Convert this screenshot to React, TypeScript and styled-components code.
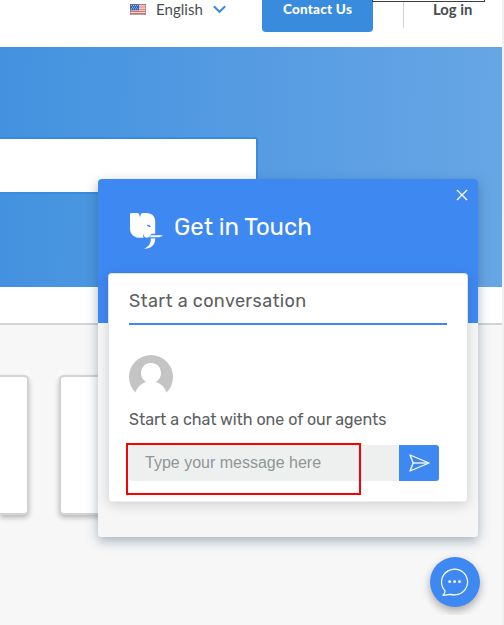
import React from "react";
import styled, { createGlobalStyle } from "styled-components";

const GlobalStyle = createGlobalStyle`
  *, *::before, *::after { box-sizing: border-box; }
  html, body { margin: 0; padding: 0; overflow: hidden; }
  body { font-family: Lato, "Liberation Sans", sans-serif; color: #474c50; }
`;

const Screen = styled.div`
  position: relative;
  display: flex;
  width: 504px;
  height: 625px;
  overflow: hidden;
  background: #f1f1f1;
`;

const Page = styled.div`
  display: flex;
  flex-direction: column;
  width: 502px;
  height: 100%;
  background: #f7f7f7;
`;

const TopBar = styled.header`
  display: flex;
  align-items: flex-start;
  height: 47px;
  flex: none;
  padding-left: 130px;
  background: #fff;
`;

const Language = styled.div`
  display: flex;
  align-items: center;
  width: 132px;
  height: 18px;
  font-size: 15px;
  line-height: 18px;
`;

const LanguageName = styled.span`
  width: 47px;
  margin: 0 10px;
  white-space: nowrap;
  letter-spacing: 0.04px;
`;

const ContactButton = styled.button`
  width: 111px;
  height: 32px;
  padding: 0 0 13px;
  border: 0;
  border-radius: 0 0 4px 4px;
  background: #398bdd;
  color: #fff;
  font: 900 13.5px/19px Lato, sans-serif;
  letter-spacing: 0.25px;
`;

const Divider = styled.div`
  width: 1px;
  height: 28px;
  margin-left: 30px;
  background: #cfd3d3;
`;

const Login = styled.a`
  margin-left: 29px;
  font-size: 14.8px;
  font-weight: 700;
  line-height: 18px;
  white-space: nowrap;
`;

const FocusOutline = styled.div`
  position: absolute;
  left: 372px;
  top: 0;
  width: 113px;
  height: 2px;
  border: 1px solid #3c3c3c;
  border-top: 0;
  background: #fff;
`;

const Hero = styled.section`
  height: 240px;
  flex: none;
  padding-top: 90px;
  background: linear-gradient(91deg, #4392df 0%, #559be2 48%, #67a6e5 100%);
`;

const SearchField = styled.div`
  width: 258px;
  height: 57px;
  border: 2px solid #398bdd;
  border-left: 0;
  border-radius: 0 3px 3px 0;
  background: #fff;
`;

const Band = styled.div`
  height: 38px;
  flex: none;
  border-bottom: 2px solid #d0d4d4;
  background: #fff;
`;

const Tiles = styled.main`
  display: flex;
  gap: 30px;
  padding-top: 50px;
`;

const Tile = styled.article<{ $cut?: boolean }>`
  width: ${(p) => (p.$cut ? 29 : 300)}px;
  height: 140px;
  flex: none;
  border: 2px solid #d0d4d4;
  border-left-width: ${(p) => (p.$cut ? 0 : 2)}px;
  border-radius: ${(p) => (p.$cut ? "0 5px 5px 0" : "5px")};
  background: #fff;
  box-shadow: 0 3px 5px rgba(0, 0, 0, 0.24);
`;

const Widget = styled.aside`
  position: absolute;
  left: 98px;
  top: 179px;
  width: 380px;
  height: 358px;
  padding: 0 10px;
  border-radius: 4px;
  background: linear-gradient(#3e88f2 144px, #f6f6f6 144px);
  box-shadow: 0 4px 12px rgba(28, 62, 91, 0.38);
  font-family: Rubik, Roboto, sans-serif;
`;

const WidgetHeader = styled.div`
  display: flex;
  align-items: flex-start;
  height: 94px;
  padding: 33px 0 0 21px;
  color: #fff;
`;

const Heading = styled.h2`
  margin: 0 0 0 11px;
  font-size: 24px;
  font-weight: 400;
  line-height: 30px;
  letter-spacing: -0.04px;
  white-space: nowrap;
`;

const CloseButton = styled.button`
  position: absolute;
  top: 10px;
  right: 10px;
  display: flex;
  padding: 0;
  border: 0;
  background: none;
`;

const ChatCard = styled.div`
  width: 360px;
  height: 229px;
  padding: 0 20px;
  border: 1px solid #e1e4e6;
  border-bottom-color: #eeeeee;
  border-radius: 4px;
  background: #fff;
  box-shadow: 0 3px 12px rgba(0, 0, 0, 0.15);
  color: #5c6060;
`;

const ChatTitle = styled.h3`
  width: 318px;
  height: 51px;
  margin: 0 0 30px;
  padding-top: 15px;
  border-bottom: 2px solid #3e88f2;
  font-size: 18px;
  font-weight: 400;
  line-height: 24px;
  letter-spacing: 0.38px;
  white-space: nowrap;
`;

const Invite = styled.p`
  margin: 10px 0 15px;
  font-size: 16px;
  line-height: 21px;
  letter-spacing: -0.02px;
  white-space: nowrap;
`;

const Composer = styled.form`
  display: flex;
  width: 310px;
  height: 36px;
  border-radius: 3px;
  overflow: hidden;
`;

const MessageInput = styled.input`
  width: 270px;
  padding: 0 16px;
  border: 0;
  outline: 0;
  background: #eef0f0;
  font: 16px "Liberation Sans", Arial, sans-serif;
  &::placeholder { color: #8f9696; opacity: 1; }
`;

const SendButton = styled.button`
  display: flex;
  align-items: center;
  justify-content: center;
  width: 40px;
  padding: 0;
  border: 0;
  background: #3e88f2;
`;

const Highlight = styled.div`
  position: absolute;
  left: 126px;
  top: 443px;
  width: 235px;
  height: 52px;
  border: 2px solid #fa0000;
  pointer-events: none;
`;

const LauncherFrame = styled.div`
  position: absolute;
  left: 420px;
  top: 547px;
  width: 70px;
  height: 68px;
  padding: 10px;
  overflow: hidden;
`;

const Launcher = styled.button`
  display: flex;
  align-items: center;
  justify-content: center;
  width: 50px;
  height: 50px;
  padding: 0;
  border: 0;
  border-radius: 50%;
  background: #3e88f2;
  box-shadow: 0 4px 9px rgba(0, 0, 0, 0.32);
`;

const Glyph = styled.svg`
  display: block;
  flex: none;
`;

const Flag = () => (
  <Glyph width="16" height="11" viewBox="0 0 16 11">
    <rect width="16" height="11" fill="#f6eeee" />
    <path d="M0 .8h16M0 3h16M0 5.2h16M0 7.4h16M0 9.6h16" stroke="#e0685c" strokeWidth="1.1" />
    <rect width="9" height="6.3" fill="#2866bd" />
    <path d="M1 1.5h7M2 3.2h6M1 4.9h7" stroke="#c9dcf5" strokeWidth=".8" strokeDasharray="1 1" />
    <rect x=".25" y=".25" width="15.5" height="10.5" fill="none" stroke="#8b6b79" strokeWidth=".5" />
  </Glyph>
);

const Elephant = () => (
  <Glyph width="34" height="37" viewBox="0 0 34 37">
    <path
      d="M1 1.4C4.2 1 7.5 1 10 1.6c.1 1.5.6 2.7 1.5 3.4-.2-1.4.1-2.7.8-3.6C14.5.9 17 .9 18.6 1.1 23.6 1.8 26.2 5 26.2 9.5v12.3h-3.8l-2.2 3.4-3.5.5c-1.1-.8-2-2-2.5-3.7-.3 1.4-.1 2.6.4 3.7H9.6C4.6 25.4 1 22 1 16.8z"
      fill="#fff"
    />
    <path d="M17.8 13c1.5-.8 3.3-.1 4 2-1.5.1-3.4-.4-4-2z" fill="#3e88f2" />
    <path d="M21.5 23.2h12.3c-1.3 1.5-3.2 2-5.6 2h-7zM21.8 26.6h4.4c.3 5.8-3.9 10.4-11.3 10.2 4.7-1.9 7.1-4.8 6.9-10.2z" fill="#fff" />
  </Glyph>
);

const Avatar = () => (
  <Glyph width="44" height="44" viewBox="0 0 44 44">
    <circle cx="22" cy="22" r="22" fill="#c4c4c4" />
    <path d="M5.5 40c2-7 6-11 11.6-13.2C13.8 25 12 22 12 18c0-6 4.3-10 10-10s10 4 10 10c0 4-1.8 7-5.1 8.8C32.5 29 36.5 33 38.5 40v4h-33z" fill="#fff" />
  </Glyph>
);

export default function App() {
  return (
    <>
      <GlobalStyle />
      <Screen>
        <Page>
          <TopBar>
            <Language>
              <Flag />
              <LanguageName>English</LanguageName>
              <Glyph width="13" height="9" viewBox="0 0 13 9">
                <path d="M.8 1.3l5.7 5.5 5.7-5.5" fill="none" stroke="#398bdd" strokeWidth="2" />
              </Glyph>
            </Language>
            <ContactButton>Contact Us</ContactButton>
            <Divider />
            <Login>Log in</Login>
          </TopBar>
          <Hero><SearchField /></Hero>
          <Band />
          <Tiles><Tile $cut /><Tile /></Tiles>
        </Page>
        <FocusOutline />

        <Widget>
          <WidgetHeader>
            <Elephant />
            <Heading>Get in Touch</Heading>
            <CloseButton aria-label="Close">
              <Glyph width="12" height="12" viewBox="0 0 12 12">
                <path d="M1 1l10 10M11 1L1 11" stroke="#fff" strokeWidth="1.4" />
              </Glyph>
            </CloseButton>
          </WidgetHeader>
          <ChatCard>
            <ChatTitle>Start a conversation</ChatTitle>
            <Avatar />
            <Invite>Start a chat with one of our agents</Invite>
            <Composer>
              <MessageInput placeholder="Type your message here" />
              <SendButton type="button" aria-label="Send">
                <Glyph width="22" height="18" viewBox="0 0 22 18" fill="none" stroke="#fff" strokeWidth="1.3" strokeLinejoin="round">
                  <path d="M2 1l19 8-19 8 3.2-8z" />
                  <path d="M5 9h15" strokeWidth="1.7" opacity=".85" />
                </Glyph>
              </SendButton>
            </Composer>
          </ChatCard>
        </Widget>
        <Highlight />

        <LauncherFrame>
          <Launcher aria-label="Chat">
            <Glyph width="28" height="28" viewBox="0 0 28 28">
              <path d="M4.1 22.8A13 12.8 0 1 1 14 26.8c-2 0-3.4-.2-4.8-.5L2 27.3c1.3-1.2 2.1-2.7 2.1-4.5z" fill="none" stroke="#fff" strokeWidth="1.2" strokeLinejoin="round" />
              <circle cx="8.7" cy="13.7" r="1.4" fill="#fff" />
              <circle cx="13.6" cy="13.7" r="1.4" fill="#fff" />
              <circle cx="18.5" cy="13.7" r="1.4" fill="#fff" />
            </Glyph>
          </Launcher>
        </LauncherFrame>
      </Screen>
    </>
  );
}
